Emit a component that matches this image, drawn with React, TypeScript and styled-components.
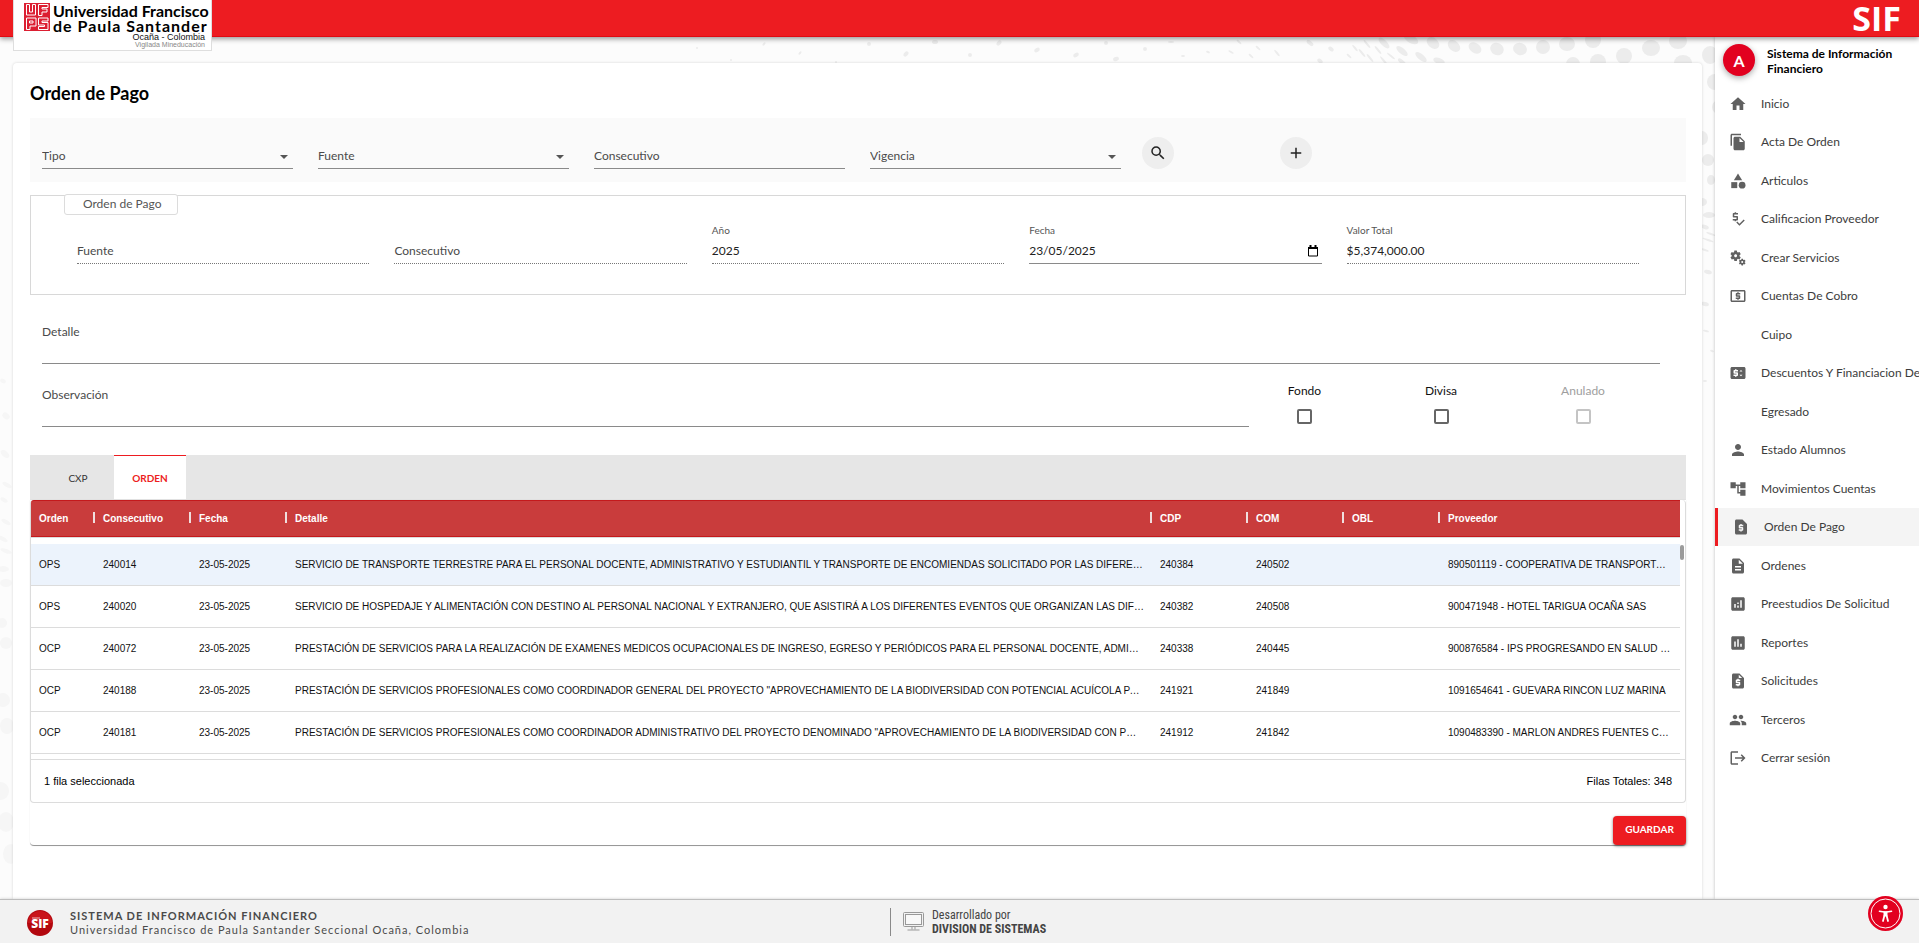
import React from 'react';
import styled, { createGlobalStyle, css } from 'styled-components';
import type { IconType } from 'react-icons';
import {
  MdAccountTree,
  MdAdd,
  MdAnalytics,
  MdAssessment,
  MdCategory,
  MdDescription,
  MdFileCopy,
  MdHome,
  MdLocalAtm,
  MdLogout,
  MdMiscellaneousServices,
  MdPeople,
  MdPerson,
  MdPriceChange,
  MdPriceCheck,
  MdRequestPage,
  MdRequestQuote,
  MdSearch,
} from 'react-icons/md';

const ui = "Lato, 'Open Sans', sans-serif";
const grid = "'Liberation Sans', Arial, sans-serif";
const narrow = "'Roboto Condensed', Roboto, sans-serif";

const GlobalStyle = createGlobalStyle`
  *, *::before, *::after { box-sizing: border-box; }
  body { margin: 0; background: #fcfcfc; color: #000; font: 12px/16px ${ui}; }
  button, input, select, textarea { font: inherit; color: inherit; margin: 0; }
`;

/* ---------- page frame ---------- */

const Page = styled.div`
  display: flex;
  flex-direction: column;
  min-height: 100vh;
`;

const TopBar = styled.header`
  display: flex;
  justify-content: space-between;
  align-items: flex-start;
  height: 37px;
  padding: 0 18px 0 13px;
  background: #ed1c21;
  border-bottom: 1px solid #e00a12;
  box-shadow: 0 2px 5px rgba(0, 0, 0, 0.4);
  position: relative;
  z-index: 2;
`;

const Brand = styled.a`
  display: flex;
  gap: 3px;
  width: 199px;
  height: 51px;
  flex: none;
  padding: 3px 0 0 10px;
  background: #fff;
  border: solid #dedede;
  border-width: 0 1px 1px;
  color: #000;
  text-decoration: none;
`;

const BrandText = styled.span`
  display: flex;
  flex-direction: column;
  width: 155px;
`;

const BrandLine = styled.span<{ $tracked?: boolean }>`
  font-size: 16px;
  line-height: 15px;
  font-weight: 700;
  white-space: nowrap;
  letter-spacing: ${(p) => (p.$tracked ? '1px' : 'normal')};
`;

const BrandSub = styled.span<{ $muted?: boolean }>`
  align-self: flex-end;
  margin-right: 3px;
  font-family: ${grid};
  font-size: ${(p) => (p.$muted ? 7 : 9)}px;
  line-height: 8px;
  color: ${(p) => (p.$muted ? '#888' : '#111')};
  white-space: nowrap;
`;

const AppName = styled.strong`
  font: 700 34px/36px 'Open Sans', sans-serif;
  color: #fff;
`;

const Body = styled.div`
  display: flex;
  flex: 1;
`;

const Main = styled.main`
  position: relative;
  flex: 1;
  min-width: 0;
  padding: 26px 13px 0;
  display: flex;
`;

const Dots = styled.svg`
  position: absolute;
  inset: 0;
  width: 100%;
  height: 100%;
`;

const Card = styled.section`
  position: relative;
  flex: 1;
  min-width: 0;
  padding: 18px 16px 53px 17px;
  background: #fff;
  border-radius: 4px 4px 0 0;
  box-shadow: 0 0 3px rgba(0, 0, 0, 0.16);
`;

const Title = styled.h1`
  margin: 0 0 13px;
  font-size: 18px;
  line-height: 24px;
  font-weight: 700;
`;

/* ---------- form fields ---------- */

const Filters = styled.form`
  display: grid;
  grid-template-columns: repeat(4, 2fr) repeat(2, 1fr) 2fr;
  height: 64px;
  background: #fafafa;
`;

const FilterCell = styled.div`
  position: relative;
  padding: 25px 13px 0 12px;
`;

const ButtonCell = styled.div`
  padding: 19px 8px 0;
`;

const line = css<{ disabled?: boolean }>`
  display: block;
  width: 100%;
  height: 26px;
  padding: 0;
  background: none;
  border: 0;
  border-bottom: 1px ${(p) => (p.disabled ? 'dotted #777' : 'solid #8a8a8a')};
  border-radius: 0;
  outline: none;
  opacity: 1;
  color: #222;
  &::placeholder { color: #4a4a4a; opacity: 1; }
`;

const TextInput = styled.input`
  ${line}
`;

const Select = styled.select`
  ${line}
  appearance: none;
  color: #4a4a4a;
`;

const Arrow = styled.span`
  position: absolute;
  right: 18px;
  top: 37px;
  border: solid transparent;
  border-width: 4px 4px 0;
  border-top-color: #555;
  pointer-events: none;
`;

const RoundButton = styled.button`
  display: grid;
  place-items: center;
  width: 32px;
  height: 32px;
  padding: 0;
  border: 0;
  border-radius: 50%;
  background: #eee;
  color: #222;
`;

const Group = styled.fieldset`
  min-width: 0;
  margin: 13px 0 0;
  padding: 0;
  border: 1px solid #d8d8d8;
`;

const GroupTitle = styled.legend`
  float: left;
  margin: -2px 0 0 33px;
  padding: 0 15px 1px 18px;
  line-height: 18px;
  background: #fff;
  border: 1px solid #dcdcdc;
  border-radius: 3px;
  color: #555;
`;

const GroupFields = styled.div`
  clear: both;
  display: grid;
  grid-template-columns: repeat(5, 1fr);
  gap: 25px;
  padding: 9px 46px 30px;
`;

const Field = styled.div`
  position: relative;
  display: flex;
  flex-direction: column;
  justify-content: flex-end;
  gap: 2px;
  height: 40px;
`;

const FieldLabel = styled.label`
  font-size: 10px;
  line-height: 12px;
  color: #555;
`;

const DateButton = styled.button`
  position: absolute;
  right: 0;
  bottom: 7px;
  display: flex;
  padding: 0 4px;
  border: 0;
  background: none;
`;

const Area = styled.textarea`
  display: block;
  width: 100%;
  height: 42px;
  padding: 2px 0 0;
  background: none;
  border: 0;
  border-bottom: 1px solid #8a8a8a;
  border-radius: 0;
  outline: none;
  resize: none;
  line-height: 16px;
  &::placeholder { color: #4a4a4a; opacity: 1; }
`;

const DetailRow = styled.div`
  padding: 27px 26px 0 12px;
`;

const NoteRow = styled.div`
  display: grid;
  grid-template-columns: 1fr 111px 162px 122px;
  align-items: end;
  padding: 19px 42px 28px 12px;
`;

const Check = styled.label<{ $off?: boolean }>`
  display: flex;
  flex-direction: column;
  align-items: center;
  gap: 10px;
  padding-bottom: 3px;
  color: ${(p) => (p.$off ? '#9e9e9e' : '#111')};
`;

const Box = styled.input`
  appearance: none;
  width: 15px;
  height: 15px;
  border: 2px solid #666;
  border-radius: 2px;
  background: #fff;
  &:disabled { border-color: #c4c4c4; }
`;

/* ---------- tabs and data table ---------- */

const Tabs = styled.div`
  display: flex;
  height: 45px;
  padding-left: 12px;
  background: #e6e6e6;
`;

const Tab = styled.button<{ $active?: boolean }>`
  width: 72px;
  height: 44px;
  padding: 0;
  border: 0;
  border-top: 1px solid ${(p) => (p.$active ? '#ed1c21' : 'transparent')};
  background: ${(p) => (p.$active ? '#fff' : 'none')};
  color: ${(p) => (p.$active ? '#ed1c21' : '#333')};
  font-size: 10px;
  font-weight: ${(p) => (p.$active ? 700 : 400)};
`;

const Panel = styled.div`
  border-bottom: 1px solid #999;
  border-radius: 0 0 4px 4px;
  box-shadow: 0 0 1px rgba(0, 0, 0, 0.2);
`;

const GridFrame = styled.div`
  border: solid #dcdcdc;
  border-width: 0 1px 1px;
  border-radius: 4px;
  font-family: ${grid};
`;

const GridBody = styled.div`
  position: relative;
  height: 259px;
  padding-right: 5px;
  overflow: hidden;
`;

const Thumb = styled.span`
  position: absolute;
  top: 45px;
  right: 1px;
  width: 4px;
  height: 15px;
  border-radius: 2px;
  background: #9b9b9b;
`;

const Table = styled.table`
  width: 100%;
  table-layout: fixed;
  border-collapse: separate;
  border-spacing: 0;
  font-size: 10px;
  line-height: 14px;
  thead { box-shadow: 0 1px 0 #dcdcdc; }
  tbody::before { content: ''; display: block; height: 7px; }
`;

const Col = styled.col<{ $w?: number }>`
  width: ${(p) => (p.$w ? `${p.$w}px` : 'auto')};
`;

const Th = styled.th`
  position: relative;
  height: 37px;
  padding: 0 8px;
  background: #c93c3c;
  border: solid #c4191c;
  border-width: 1px 0;
  color: #fff;
  font-weight: 700;
  text-align: left;
  &:first-child { border-top-left-radius: 3px; }
  &:not(:last-child)::after {
    content: '';
    position: absolute;
    right: 0;
    top: 11px;
    width: 2px;
    height: 11px;
    background: #f0dede;
  }
`;

const Td = styled.td`
  height: 42px;
  padding: 0 8px;
  border-bottom: 1px solid #dcdcdc;
  color: #111;
  overflow: hidden;
  text-overflow: ellipsis;
  white-space: nowrap;
`;

const Tr = styled.tr<{ $selected?: boolean }>`
  background: ${(p) => (p.$selected ? '#ecf3fc' : '#fff')};
`;

const GridFooter = styled.div`
  display: flex;
  justify-content: space-between;
  align-items: center;
  height: 43px;
  padding: 0 13px;
  border-top: 1px solid #dcdcdc;
  font-size: 11px;
`;

const Actions = styled.div`
  display: flex;
  justify-content: flex-end;
  padding-top: 13px;
`;

const SaveButton = styled.button`
  width: 73px;
  height: 29px;
  padding: 0 0 3px;
  border: 0;
  border-radius: 4px;
  background: #ed1c21;
  box-shadow: 0 1px 3px rgba(0, 0, 0, 0.5);
  color: #fff;
  font-size: 10px;
  font-weight: 700;
`;

/* ---------- side menu ---------- */

const Side = styled.aside`
  position: relative;
  width: 204px;
  flex: none;
  background: #fff;
  box-shadow: 0 0 3px rgba(0, 0, 0, 0.25);
  overflow: hidden;
  z-index: 1;
`;

const User = styled.div`
  display: flex;
  align-items: center;
  gap: 12px;
  padding: 7px 8px 9px;
  font-weight: 700;
  line-height: 15px;
`;

const Avatar = styled.span`
  display: grid;
  place-items: center;
  width: 32px;
  height: 32px;
  flex: none;
  border-radius: 50%;
  background: #e2001f;
  box-shadow: 0 2px 6px rgba(0, 0, 0, 0.35);
  color: #fff;
  font-size: 16px;
`;

const UserName = styled.span`
  padding-top: 2px;
`;

const Menu = styled.nav`
  display: flex;
  flex-direction: column;
  justify-content: space-between;
  height: 692px;
`;

const MenuLink = styled.a<{ $active?: boolean }>`
  display: grid;
  grid-template-columns: 32px 1fr;
  align-items: center;
  height: 38px;
  padding-left: 14px;
  border-left: ${(p) => (p.$active ? '3px solid #ed1c21' : '0')};
  background: ${(p) => (p.$active ? '#f4f4f4' : 'none')};
  color: #3c3c3c;
  text-decoration: none;
  white-space: nowrap;
  svg { color: #606060; }
`;

const MenuText = styled.span`
  grid-column: 2;
`;

/* ---------- footer ---------- */

const Footer = styled.footer`
  position: relative;
  z-index: 2;
  display: grid;
  grid-template-columns: 890fr 1029fr;
  align-items: center;
  height: 44px;
  background: #f2f2f2;
  border-top: 1px solid #bdbdbd;
  box-shadow: 0 0 3px rgba(0, 0, 0, 0.2);
`;

const FootBrand = styled.div`
  display: flex;
  align-items: center;
  gap: 17px;
  padding: 2px 0 0 27px;
  color: #4a4a4a;
  font-size: 11px;
  line-height: 14px;
  letter-spacing: 1px;
  white-space: nowrap;
`;

const Stack = styled.div`
  display: flex;
  flex-direction: column;
`;

const FootCredit = styled.div`
  display: flex;
  align-items: center;
  gap: 8px;
  height: 28px;
  padding-left: 12px;
  border-left: 1px solid #8a8a8a;
  color: #444;
  font: 12px/14px ${narrow};
`;

const AccessButton = styled.button`
  position: fixed;
  right: 16px;
  bottom: 12px;
  z-index: 3;
  width: 35px;
  height: 35px;
  padding: 0;
  border: 0;
  border-radius: 50%;
  background: none;
  svg { display: block; }
`;

/* ---------- data ---------- */

const menu: { text: string; icon?: IconType; active?: boolean }[] = [
  { text: 'Inicio', icon: MdHome },
  { text: 'Acta De Orden', icon: MdFileCopy },
  { text: 'Articulos', icon: MdCategory },
  { text: 'Calificacion Proveedor', icon: MdPriceCheck },
  { text: 'Crear Servicios', icon: MdMiscellaneousServices },
  { text: 'Cuentas De Cobro', icon: MdLocalAtm },
  { text: 'Cuipo' },
  { text: 'Descuentos Y Financiacion De', icon: MdPriceChange },
  { text: 'Egresado' },
  { text: 'Estado Alumnos', icon: MdPerson },
  { text: 'Movimientos Cuentas', icon: MdAccountTree },
  { text: 'Orden De Pago', icon: MdRequestPage, active: true },
  { text: 'Ordenes', icon: MdDescription },
  { text: 'Preestudios De Solicitud', icon: MdAnalytics },
  { text: 'Reportes', icon: MdAssessment },
  { text: 'Solicitudes', icon: MdRequestQuote },
  { text: 'Terceros', icon: MdPeople },
  { text: 'Cerrar sesión', icon: MdLogout },
];

const columns: [string, number?][] = [
  ['Orden', 64],
  ['Consecutivo', 96],
  ['Fecha', 96],
  ['Detalle'],
  ['CDP', 96],
  ['COM', 96],
  ['OBL', 96],
  ['Proveedor', 240],
];

const rows = [
  ['OPS', '240014', '23-05-2025', 'SERVICIO DE TRANSPORTE TERRESTRE PARA EL PERSONAL DOCENTE, ADMINISTRATIVO Y ESTUDIANTIL Y TRANSPORTE DE ENCOMIENDAS SOLICITADO POR LAS DIFERENTES', '240384', '240502', '', '890501119 - COOPERATIVA DE TRANSPORTADORES'],
  ['OPS', '240020', '23-05-2025', 'SERVICIO DE HOSPEDAJE Y ALIMENTACIÓN CON DESTINO AL PERSONAL NACIONAL Y EXTRANJERO, QUE ASISTIRÁ A LOS DIFERENTES EVENTOS QUE ORGANIZAN LAS DIFERENTES', '240382', '240508', '', '900471948 - HOTEL TARIGUA OCAÑA SAS'],
  ['OCP', '240072', '23-05-2025', 'PRESTACIÓN DE SERVICIOS PARA LA REALIZACIÓN DE EXAMENES MEDICOS OCUPACIONALES DE INGRESO, EGRESO Y PERIÓDICOS PARA EL PERSONAL DOCENTE, ADMINISTRATIVO', '240338', '240445', '', '900876584 - IPS PROGRESANDO EN SALUD OCUPACIONAL'],
  ['OCP', '240188', '23-05-2025', 'PRESTACIÓN DE SERVICIOS PROFESIONALES COMO COORDINADOR GENERAL DEL PROYECTO "APROVECHAMIENTO DE LA BIODIVERSIDAD CON POTENCIAL ACUÍCOLA PARA EL', '241921', '241849', '', '1091654641 - GUEVARA RINCON LUZ MARINA'],
  ['OCP', '240181', '23-05-2025', 'PRESTACIÓN DE SERVICIOS PROFESIONALES COMO COORDINADOR ADMINISTRATIVO DEL PROYECTO DENOMINADO "APROVECHAMIENTO DE LA BIODIVERSIDAD CON POTENCIAL', '241912', '241842', '', '1090483390 - MARLON ANDRES FUENTES CARRASCAL'],
];

/* halftone dots behind the card: cx, cy, rx, ry, rotation */
const dots: number[][] = [
  [697, 11, 1, 1, 0], [731, 23, 1, 1, 0], [764, 7, 2, 1, -50], [800, 16, 2, 1, -50], [836, 25, 1, 1, 0],
  [869, 7, 2, 2, 0], [906, 17, 3, 2, -50], [935, 5, 3, 2, 0], [970, 18, 2, 2, 0], [999, 6, 3, 2, -50],
  [1037, 13, 3, 2, -30], [1076, 18, 3, 2, -30], [1106, 6, 2, 2, 0], [1116, 22, 3, 2, -20], [1145, 12, 2, 2, 0],
  [1171, 5, 3, 1, 0], [1183, 19, 2, 1, 0], [1208, 15, 2, 1, 20], [1231, 15, 3, 1, 30], [1239, 5, 3, 1, 40],
  [1251, 19, 3, 1, 40], [1258, 11, 3, 1, 40], [1277, 16, 4, 1, 50], [1310, 6, 4, 2, 40], [1320, 24, 3, 2, 40],
  [1331, 12, 3, 2, 40], [1349, 19, 3, 1, 40], [1355, 11, 4, 1, 50], [1362, 16, 5, 1, 50], [1367, 7, 5, 1, 50],
  [1370, 21, 5, 1, 50], [1378, 13, 5, 1, 50], [1384, 6, 7, 3, 45], [1384, 24, 6, 1, 50], [1391, 19, 5, 1, 40],
  [1402, 14, 7, 3, 40], [1402, 25, 5, 2, 40], [1411, 2, 8, 4, 30], [1421, 20, 7, 3, 40], [1439, 24, 6, 3, 20],
  [1433, 6, 7, 5, 40], [1454, 9, 7, 5, 40], [1475, 11, 7, 5, 35], [1497, 12, 7, 6, 30], [1520, 12, 7, 6, 20],
  [1543, 10, 7, 7, 0], [1567, 7, 8, 7, 0], [1593, 3, 8, 8, 0], [1573, 27, 7, 7, 0], [1598, 25, 8, 8, 0],
  [1624, 19, 8, 8, 0], [1651, 11, 9, 8, 0], [1678, 4, 9, 8, 0], [1683, 26, 9, 8, 0], [1710, 18, 8, 9, 0],
  [1715, 45, 8, 8, 0], [1719, 70, 7, 7, 0], [1702, 101, 6, 7, 0], [1708, 123, 6, 6, 0], [1711, 143, 4, 5, 0],
  [1702, 165, 5, 4, 0], [1709, 178, 6, 3, 0], [1705, 190, 4, 2, 20], [1711, 197, 5, 1, 20], [1708, 203, 6, 1, 20],
  [1705, 213, 4, 1, 20], [1708, 235, 4, 2, 15], [1705, 267, 4, 2, 15], [1706, 294, 3, 1, 15], [1712, 314, 2, 1, 15],
  [1705, 344, 2, 1, 0],
];

const leftDots: number[][] = [
  [3, 344, 3, 2, 30], [6, 379, 4, 3, 40], [5, 417, 5, 3, 40], [7, 448, 5, 2, 30], [4, 463, 4, 2, 30],
  [6, 485, 5, 2, 30], [3, 502, 5, 2, 30], [6, 514, 6, 2, 20], [3, 532, 6, 3, 0], [6, 546, 6, 4, 0],
  [2, 586, 5, 5, 0], [6, 606, 6, 6, 0], [3, 663, 7, 7, 0], [7, 689, 7, 8, 0], [1, 754, 8, 9, 0],
  [6, 785, 8, 10, 0], [11, 817, 8, 10, 0],
];

const Ellipses = ({ list, fill }: { list: number[][]; fill: string }) => (
  <g fill={fill}>
    {list.map(([x, y, rx, ry, a], i) => (
      <ellipse key={i} cx={x} cy={y} rx={rx} ry={ry} transform={`rotate(${a} ${x} ${y})`} />
    ))}
  </g>
);

const UfpsMark = () => (
  <svg width="26" height="28" viewBox="0 0 26 28" aria-hidden="true">
    <rect width="26" height="28" fill="#dc1f32" />
    <g fill="none" stroke="#fff" strokeWidth="1">
      <path d="M2.500 1.500v10.500h9v-10.500h-3v7.500h-3v-7.500z" />
      <path d="M14.500 12.500v-11h9.500v3h-6v1.500h5v3h-5v3.500z" />
      <path d="M2.500 26.500v-11.500h9.500v8h-6v3.500zM5.500 18h3.500v2h-3.500z" />
      <path d="M14.500 15h9.500v3h-6v1.500h6v7h-9.500v-3h6v-1.500h-6z" />
    </g>
  </svg>
);

const SelectField = ({ text }: { text: string }) => (
  <FilterCell>
    <Select aria-label={text} defaultValue="">
      <option value="">{text}</option>
    </Select>
    <Arrow />
  </FilterCell>
);

export default function App() {
  return (
    <Page>
      <GlobalStyle />
      <TopBar>
        <Brand href="#">
          <UfpsMark />
          <BrandText>
            <BrandLine>Universidad Francisco</BrandLine>
            <BrandLine $tracked>de Paula Santander</BrandLine>
            <BrandSub>Ocaña - Colombia</BrandSub>
            <BrandSub $muted>Vigilada Mineducación</BrandSub>
          </BrandText>
        </Brand>
        <AppName>SIF</AppName>
      </TopBar>

      <Body>
        <Main>
          <Dots viewBox="0 0 1715 862" preserveAspectRatio="xMaxYMin slice" aria-hidden="true">
            <Ellipses list={dots} fill="#ececec" />
            <Ellipses list={leftDots} fill="#f6f6f6" />
          </Dots>
          <Card>
            <Title>Orden de Pago</Title>

            <Filters>
              <SelectField text="Tipo" />
              <SelectField text="Fuente" />
              <FilterCell>
                <TextInput aria-label="Consecutivo" placeholder="Consecutivo" />
              </FilterCell>
              <SelectField text="Vigencia" />
              <ButtonCell>
                <RoundButton type="button" aria-label="Buscar"><MdSearch size={18} /></RoundButton>
              </ButtonCell>
              <ButtonCell>
                <RoundButton type="button" aria-label="Agregar"><MdAdd size={18} /></RoundButton>
              </ButtonCell>
            </Filters>

            <Group>
              <GroupTitle>Orden de Pago</GroupTitle>
              <GroupFields>
                <Field><TextInput aria-label="Fuente" placeholder="Fuente" disabled /></Field>
                <Field><TextInput aria-label="Consecutivo de la orden" placeholder="Consecutivo" disabled /></Field>
                <Field>
                  <FieldLabel htmlFor="anio">Año</FieldLabel>
                  <TextInput id="anio" defaultValue="2025" disabled />
                </Field>
                <Field>
                  <FieldLabel htmlFor="fecha">Fecha</FieldLabel>
                  <TextInput id="fecha" defaultValue="23/05/2025" />
                  <DateButton type="button" aria-label="Abrir calendario">
                    <svg width="10" height="12" viewBox="0 0 10 12" fill="none" stroke="#000">
                      <path d="M.5 2.500h9v8.500h-9z" />
                      <path d="M0 3h10M2.500 0v2M7.500 0v2" strokeWidth="2" />
                    </svg>
                  </DateButton>
                </Field>
                <Field>
                  <FieldLabel htmlFor="valor">Valor Total</FieldLabel>
                  <TextInput id="valor" defaultValue="$5,374,000.00" disabled />
                </Field>
              </GroupFields>
            </Group>

            <DetailRow>
              <Area aria-label="Detalle" placeholder="Detalle" />
            </DetailRow>
            <NoteRow>
              <Area aria-label="Observación" placeholder="Observación" />
              <Check>Fondo<Box type="checkbox" /></Check>
              <Check>Divisa<Box type="checkbox" /></Check>
              <Check $off>Anulado<Box type="checkbox" disabled /></Check>
            </NoteRow>

            <Tabs role="tablist">
              <Tab type="button" role="tab">CXP</Tab>
              <Tab type="button" role="tab" aria-selected $active>ORDEN</Tab>
            </Tabs>
            <Panel>
              <GridFrame>
                <GridBody>
                  <Table>
                    <colgroup>
                      {columns.map(([name, w]) => <Col key={name} $w={w} />)}
                    </colgroup>
                    <thead>
                      <tr>{columns.map(([name]) => <Th key={name} scope="col">{name}</Th>)}</tr>
                    </thead>
                    <tbody>
                      {rows.map((row, i) => (
                        <Tr key={row[1]} $selected={i === 0}>
                          {row.map((cell, j) => <Td key={j}>{cell}</Td>)}
                        </Tr>
                      ))}
                    </tbody>
                  </Table>
                  <Thumb />
                </GridBody>
                <GridFooter>
                  <span>1 fila seleccionada</span>
                  <span>Filas Totales: 348</span>
                </GridFooter>
              </GridFrame>
              <Actions>
                <SaveButton type="button">GUARDAR</SaveButton>
              </Actions>
            </Panel>
          </Card>
        </Main>

        <Side>
          <User>
            <Avatar>A</Avatar>
            <UserName>Sistema de Información Financiero</UserName>
          </User>
          <Menu>
            {menu.map(({ text, icon: Icon, active }) => (
              <MenuLink key={text} href="#" $active={active}>
                {Icon && <Icon size={18} />}
                <MenuText>{text}</MenuText>
              </MenuLink>
            ))}
          </Menu>
        </Side>
      </Body>

      <Footer>
        <FootBrand>
          <svg width="26" height="26" viewBox="0 0 26 26" role="img" aria-label="SIF">
            <circle cx="13" cy="13" r="13" fill="#b3080f" />
            <path d="M1 13a12 12 0 0 1 24 0z" fill="#c9151b" />
            <text x="13" y="18" textAnchor="middle" fill="#fff" fontFamily="Open Sans, sans-serif" fontWeight="800" fontSize="12" letterSpacing="0">SIF</text>
            <path d="M5 8h8" stroke="#fff" strokeWidth=".7" />
          </svg>
          <Stack>
            <strong>SISTEMA DE INFORMACIÓN FINANCIERO</strong>
            <span>Universidad Francisco de Paula Santander Seccional Ocaña, Colombia</span>
          </Stack>
        </FootBrand>
        <FootCredit>
          <svg width="21" height="20" viewBox="0 0 21 20" fill="none" stroke="#999" aria-hidden="true">
            <rect x=".5" y=".5" width="20" height="14" rx="1" />
            <rect x="2.500" y="2.500" width="16" height="10" fill="#f8f8f8" />
            <path d="M9 15v2.500M12 15v2.500M4.500 18h12" />
          </svg>
          <Stack>
            <span>Desarrollado por</span>
            <strong>DIVISION DE SISTEMAS</strong>
          </Stack>
        </FootCredit>
      </Footer>

      <AccessButton type="button" aria-label="Accesibilidad">
        <svg width="35" height="35" viewBox="0 0 35 35">
          <circle cx="17.500" cy="17.500" r="17.500" fill="#e2001f" />
          <circle cx="17.500" cy="17.500" r="14.500" fill="none" stroke="#fff" />
          <circle cx="17.500" cy="11" r="2.200" fill="#fff" />
          <path d="M11.500 15.200q6 1.600 12 0" fill="none" stroke="#fff" strokeWidth="1.600" strokeLinecap="round" />
          <path d="M15.500 15.500h4v5h-4z" fill="#fff" />
          <path d="M16.300 20l-1.300 5M18.700 20l1.300 5" fill="none" stroke="#fff" strokeWidth="1.800" strokeLinecap="round" />
        </svg>
      </AccessButton>
    </Page>
  );
}
